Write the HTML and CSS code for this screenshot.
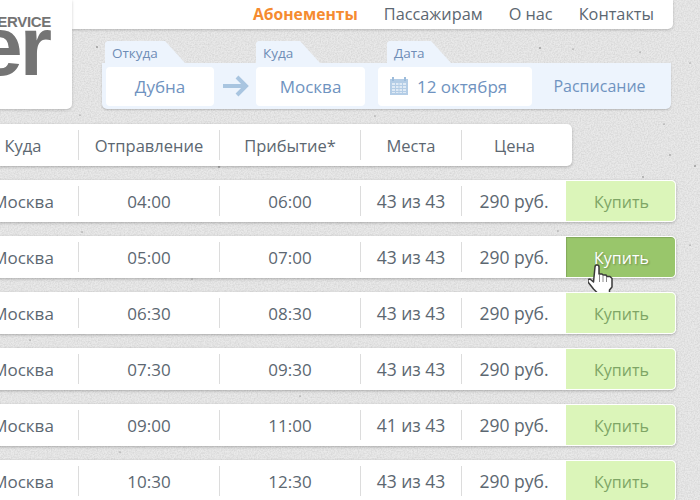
FILE: index.html
```html
<!DOCTYPE html>
<html lang="ru">
<head>
    <meta charset="UTF-8">
    <title>Расписание</title>
    <link rel="stylesheet" href="styles.css">
</head>
<body>
    <div class="page">
        <div class="top">
            <div class="logo">
                <div class="logo-small">SERVICE</div>
                <div class="logo-big">er</div>
            </div>
            <div class="top-right">
                <div class="nav">
                    <a class="nav-active">Абонементы</a>
                    <a>Пассажирам</a>
                    <a>О нас</a>
                    <a>Контакты</a>
                </div>
                <div class="tabs">
                    <div class="tab tab-from">Откуда</div>
                    <div class="tab tab-to">Куда</div>
                    <div class="tab tab-date">Дата</div>
                </div>
                <div class="search">
                    <div class="field field-from">Дубна</div>
                    <svg class="arrow" width="26" height="22" viewBox="0 0 26 22">
                        <path d="M0 11H23M14 2l9 9-9 9" fill="none" stroke="#a9c5e0" stroke-width="4"/>
                    </svg>
                    <div class="field field-to">Москва</div>
                    <div class="field field-date">
                        <svg class="cal" width="18" height="18" viewBox="0 0 18 18">
                            <rect x="0" y="2" width="18" height="16" fill="#b4cde6"/>
                            <rect x="2" y="0" width="2" height="4" fill="#9dbcdb"/>
                            <rect x="14" y="0" width="2" height="4" fill="#9dbcdb"/>
                            <path d="M2 6h14v10H2z" fill="#dfeaf5"/>
                            <path d="M2 8.500h14M2 11.500h14M2 14.500h14M5.500 6v10M9 6v10M12.500 6v10" stroke="#b4cde6" stroke-width="1"/>
                        </svg>
                        12 октября
                    </div>
                    <div class="search-btn">Расписание</div>
                </div>
            </div>
        </div>

        <div class="row head">
            <div class="cell">Куда</div>
            <div class="cell">Отправление</div>
            <div class="cell">Прибытие*</div>
            <div class="cell">Места</div>
            <div class="cell cell-price">Цена</div>
        </div>

        <div class="row">
            <div class="cell">Москва</div>
            <div class="cell">04:00</div>
            <div class="cell">06:00</div>
            <div class="cell num">43 из 43</div>
            <div class="cell num">290 руб.</div>
            <div class="buy">Купить</div>
        </div>
        <div class="row">
            <div class="cell">Москва</div>
            <div class="cell">05:00</div>
            <div class="cell">07:00</div>
            <div class="cell num">43 из 43</div>
            <div class="cell num">290 руб.</div>
            <div class="buy buy-hover">
                Купить
                <svg class="hand" width="26" height="34" viewBox="0 0 26 34">
                    <path d="M7 3q0-2 2-2t2 2v7h3l1 1h3l1 1.500h3l2 2v8.500l-2.500 3v5h-12v-2l-4-4-5.500-7v-2.500l2-.5 3.500 3z" fill="#fff" stroke="#3a3a3a" stroke-width="1.500" stroke-linejoin="round"/>
                    <path d="M11.500 11v7M15 12v6M18.500 13v5" stroke="#8a8a8a" stroke-width="1" fill="none"/>
                </svg>
            </div>
        </div>
        <div class="row">
            <div class="cell">Москва</div>
            <div class="cell">06:30</div>
            <div class="cell">08:30</div>
            <div class="cell num">43 из 43</div>
            <div class="cell num">290 руб.</div>
            <div class="buy">Купить</div>
        </div>
        <div class="row">
            <div class="cell">Москва</div>
            <div class="cell">07:30</div>
            <div class="cell">09:30</div>
            <div class="cell num">43 из 43</div>
            <div class="cell num">290 руб.</div>
            <div class="buy">Купить</div>
        </div>
        <div class="row">
            <div class="cell">Москва</div>
            <div class="cell">09:00</div>
            <div class="cell">11:00</div>
            <div class="cell num">41 из 43</div>
            <div class="cell num">290 руб.</div>
            <div class="buy">Купить</div>
        </div>
        <div class="row">
            <div class="cell">Москва</div>
            <div class="cell">10:30</div>
            <div class="cell">12:30</div>
            <div class="cell num">43 из 43</div>
            <div class="cell num">290 руб.</div>
            <div class="buy">Купить</div>
        </div>
    </div>
</body>
</html>
```

FILE: styles.css
```css
* {
    margin: 0;
    padding: 0;
    box-sizing: border-box;
}

html, body {
    height: 500px;
    overflow: hidden;
}

body {
    font-family: 'Open Sans', 'Noto Sans', sans-serif;
    font-size: 17px;
    color: #5c6771;
    background-color: #e9e9e9;
    background-image: url("data:image/svg+xml,%3Csvg xmlns='http://www.w3.org/2000/svg' width='700' height='500'%3E%3Cfilter id='n'%3E%3CfeTurbulence type='fractalNoise' baseFrequency='0.7' numOctaves='2'/%3E%3CfeColorMatrix values='0 0 0 0 0.5 0 0 0 0 0.5 0 0 0 0 0.5 0.8 0 0 0 -0.26'/%3E%3C/filter%3E%3Crect width='700' height='500' filter='url(%23n)'/%3E%3Cg fill='%23666'%3E%3Ccircle cx='97' cy='47' r='.8'/%3E%3Ccircle cx='540' cy='48' r='.8'/%3E%3Ccircle cx='573' cy='49' r='.6'/%3E%3Ccircle cx='640' cy='52' r='.6'/%3E%3Ccircle cx='690' cy='63' r='.6'/%3E%3Ccircle cx='375' cy='116' r='.6'/%3E%3Ccircle cx='80' cy='115' r='.6'/%3E%3Ccircle cx='664' cy='124' r='.6'/%3E%3Ccircle cx='670' cy='155' r='.7'/%3E%3Ccircle cx='219' cy='167' r='.8'/%3E%3Ccircle cx='695' cy='166' r='.8'/%3E%3Ccircle cx='643' cy='177' r='.7'/%3E%3Ccircle cx='82' cy='232' r='.6'/%3E%3Ccircle cx='558' cy='231' r='.6'/%3E%3Ccircle cx='690' cy='245' r='.6'/%3E%3Ccircle cx='192' cy='279' r='.6'/%3E%3Ccircle cx='30' cy='340' r='.6'/%3E%3Ccircle cx='300' cy='396' r='.6'/%3E%3Ccircle cx='120' cy='452' r='.6'/%3E%3C/g%3E%3C/svg%3E");
}

.page {
    width: 740px;
    margin-left: -32px;
}

.top {
    display: flex;
    align-items: flex-start;
}

.logo {
    width: 104px;
    height: 109px;
    background: white;
    border-radius: 0 0 5px 0;
    box-shadow: 0 1px 3px rgba(0,0,0,0.2);
    position: relative;
    z-index: 1;
    padding-right: 21px;
    text-align: right;
    color: #747474;
    font-family: 'Liberation Sans', Arial, sans-serif;
    font-weight: bold;
    overflow: hidden;
}

.logo-small {
    font-size: 15px;
    line-height: 17px;
    margin-top: 13px;
    letter-spacing: -0.3px;
}

.logo-big {
    font-size: 83px;
    line-height: 33px;
    letter-spacing: -3px;
    margin-right: 2px;
    white-space: nowrap;
}

.top-right {
    width: 601px;
}

.nav {
    height: 29px;
    background: white;
    border-radius: 0 0 5px 0;
    box-shadow: 0 1px 3px rgba(0,0,0,0.2);
    display: flex;
    justify-content: flex-end;
    align-items: center;
    gap: 26px;
    padding: 0 19px 2px 0;
    font-size: 16.300px;
}

.nav-active {
    color: #f58b30;
    font-weight: bold;
    font-size: 15.700px;
}

.tabs {
    display: flex;
    margin: 12px 0 0 33px;
}

.tab {
    width: 64px;
    height: 22px;
    padding: 3px 0 0 7px;
    background: #edf4fd;
    color: #6f8db6;
    font-size: 13.500px;
    line-height: 18px;
    clip-path: polygon(2px 0, calc(100% - 20px) 0, 100% 100%, 0 100%, 0 2px);
}

.tab-from {
    width: 80px;
}

.tab-to {
    margin-left: 71px;
}

.tab-date {
    margin-left: 67px;
}

.search {
    width: 569px;
    height: 46px;
    margin-left: 30px;
    padding: 0 4px;
    background: #edf4fd;
    border-radius: 0 0 5px 5px;
    box-shadow: 0 1px 2px rgba(0,0,0,0.2);
    display: flex;
    align-items: center;
    color: #6f93c0;
}

.field {
    height: 39px;
    background: white;
    border-radius: 4px;
    display: flex;
    align-items: center;
    justify-content: center;
}

.field-from {
    width: 108px;
}

.arrow {
    margin: 0 7px 0 9px;
}

.field-to {
    width: 109px;
    margin-right: 13px;
}

.field-date {
    width: 154px;
    justify-content: flex-start;
    padding-left: 12px;
    gap: 9px;
}

.search-btn {
    flex: 1;
    text-align: center;
    font-size: 16px;
}

.row {
    width: 708px;
    height: 42px;
    margin-top: 14px;
    padding: 6px 0;
    background: white;
    border-radius: 0 5px 5px 0;
    box-shadow: 0 1px 3px rgba(0,0,0,0.25);
    display: grid;
    grid-template-columns: 110px 141px 141px 101px 105px 110px;
    align-items: stretch;
}

.head {
    width: 604px;
    margin-top: 15px;
    font-size: 16.500px;
    grid-template-columns: 110px 141px 141px 101px 111px;
}

.cell {
    display: flex;
    align-items: center;
    justify-content: center;
    border-left: 1px solid #dcdcdc;
}

.cell:first-child {
    border-left: none;
}

.num {
    font-size: 17.500px;
}

.cell-price {
    padding-right: 5px;
}

.buy {
    margin: -6px 0;
    padding: 1px 0 0 2px;
    font-size: 16px;
    display: flex;
    align-items: center;
    justify-content: center;
    background: #dbf5b9;
    color: #7ea565;
    border: 1px solid white;
    border-left: none;
    border-radius: 0 5px 5px 0;
    position: relative;
}

.buy-hover {
    background: #99c66b;
    color: white;
    text-shadow: 1px 1px 2px rgba(0,0,0,0.3);
    box-shadow: inset 1px 1px 1px rgba(0,0,0,0.15);
}

.hand {
    position: absolute;
    left: 22px;
    top: 27px;
}
```
